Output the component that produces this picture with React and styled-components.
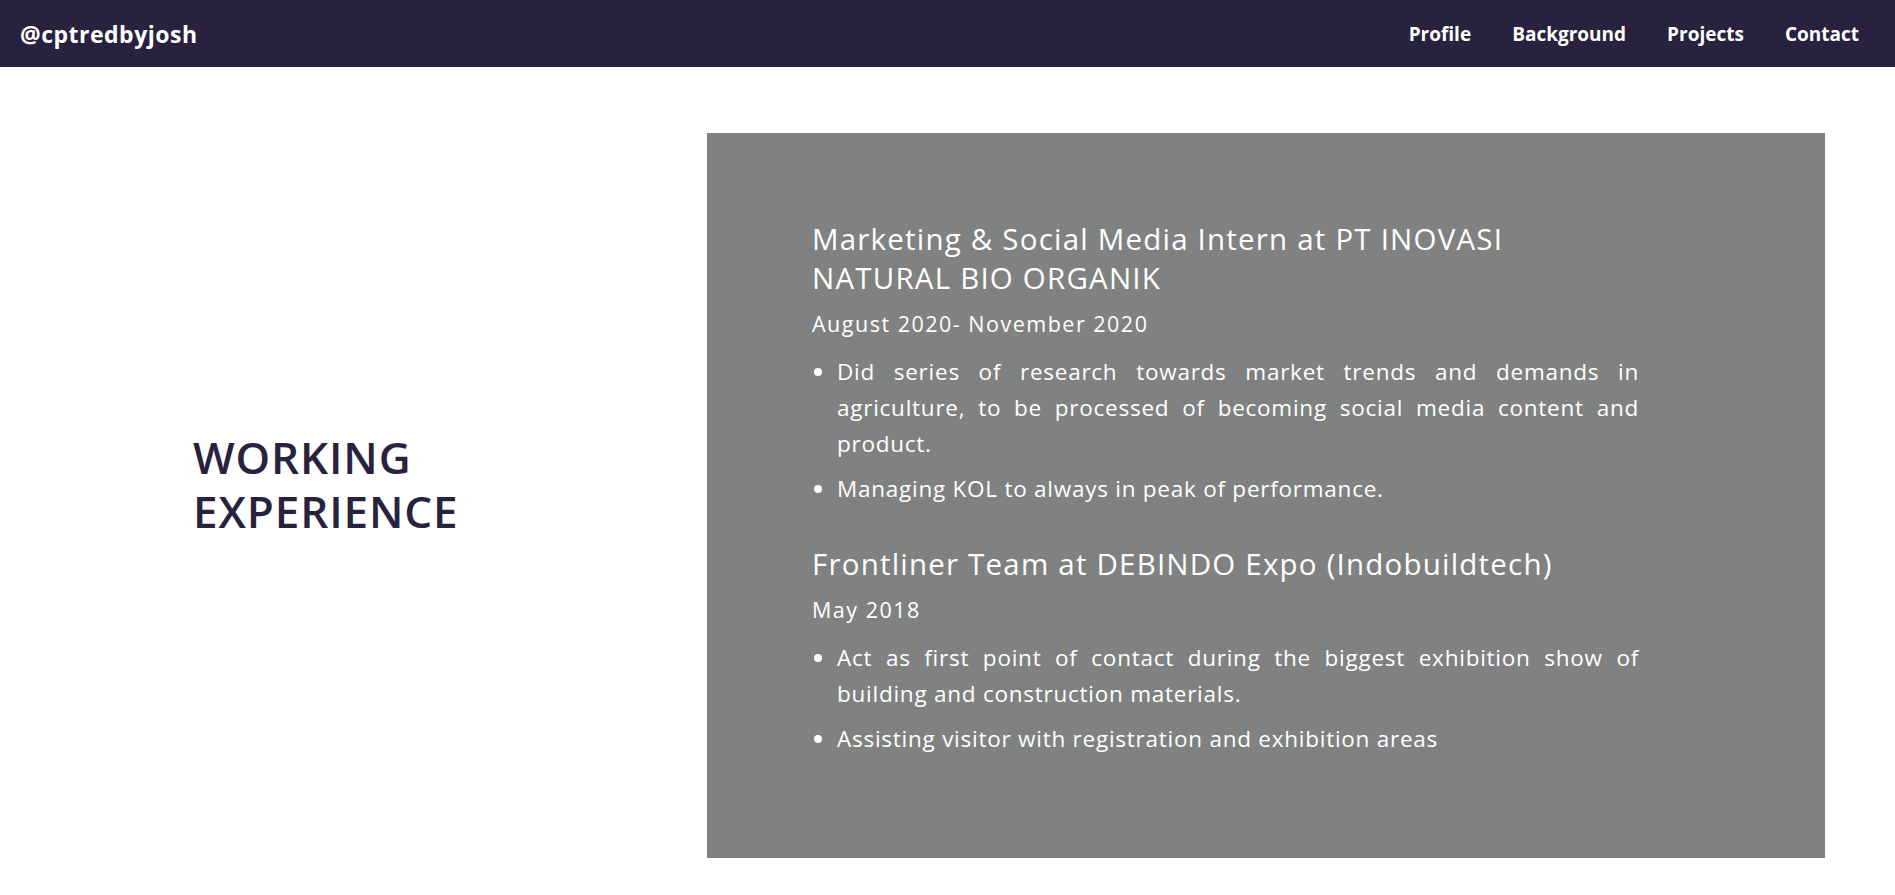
import styled, { createGlobalStyle } from "styled-components";

const GlobalStyle = createGlobalStyle`
    * {
        box-sizing: border-box;
    }
    body {
        margin: 0;
        font-family: "Open Sans", "Lato", sans-serif;
        background: #ffffff;
    }
`;

const jobs = [
    {
        title: ["Marketing & Social Media Intern at PT INOVASI", "NATURAL BIO ORGANIK"],
        date: "August 2020- November 2020",
        points: [
            "Did series of research towards market trends and demands in agriculture, to be processed of becoming social media content and product.",
            "Managing KOL to always in peak of performance.",
        ],
    },
    {
        title: ["Frontliner Team at DEBINDO Expo (Indobuildtech)"],
        date: "May 2018",
        points: [
            "Act as first point of contact during the biggest exhibition show of building and construction materials.",
            "Assisting visitor with registration and exhibition areas",
        ],
    },
];

const links = ["Profile", "Background", "Projects", "Contact"];

export default function App() {
    return (
        <>
            <GlobalStyle />
            <StyledNav>
                <StyledLogo href="#">@cptredbyjosh</StyledLogo>
                <StyledLinks>
                    {links.map((link) => (
                        <StyledLink key={link} href="#">{link}</StyledLink>
                    ))}
                </StyledLinks>
            </StyledNav>
            <StyledSection>
                <StyledSide>
                    <StyledHeading>
                        <StyledHeadingLine>WORKING</StyledHeadingLine>
                        <StyledHeadingLine>EXPERIENCE</StyledHeadingLine>
                    </StyledHeading>
                </StyledSide>
                <StyledCard>
                    {jobs.map((job, index) => (
                        <StyledJob key={job.date} $first={index === 0}>
                            <StyledTitle>
                                {job.title.map((line, i) => (
                                    <span key={line}>{i > 0 && <br />}{line}</span>
                                ))}
                            </StyledTitle>
                            <StyledDate>{job.date}</StyledDate>
                            <StyledList>
                                {job.points.map((point) => (
                                    <StyledItem key={point}>{point}</StyledItem>
                                ))}
                            </StyledList>
                        </StyledJob>
                    ))}
                </StyledCard>
            </StyledSection>
        </>
    );
}

const StyledNav = styled.nav`
    display: flex;
    align-items: center;
    justify-content: space-between;
    height: 67px;
    padding: 0 36px 0 20px;
    background-color: #28223f;
`;

const StyledLogo = styled.a`
    color: #ffffff;
    font-size: 23px;
    font-weight: 700;
    letter-spacing: 0.5px;
    text-decoration: none;
`;

const StyledLinks = styled.div`
    display: flex;
    gap: 41px;
`;

const StyledLink = styled.a`
    color: #ffffff;
    font-size: 19px;
    font-weight: 700;
    text-decoration: none;
`;

const StyledSection = styled.section`
    display: flex;
    padding: 66px 70px 40px 0;
`;

const StyledSide = styled.div`
    display: flex;
    align-items: center;
    width: 707px;
    flex-shrink: 0;
    padding-left: 193px;
`;

const StyledHeading = styled.h2`
    display: flex;
    flex-direction: column;
    margin: 0 0 24px;
    color: #28223f;
    font-size: 44px;
    font-weight: 600;
    letter-spacing: 0.9px;
`;

const StyledHeadingLine = styled.span`
    display: block;
    height: 54px;
    line-height: 54px;
`;

const StyledCard = styled.div`
    width: 1118px;
    padding: 86px 186px 101px 105px;
    background-color: #7f8280;
    color: #ffffff;
`;

const StyledJob = styled.div`
    margin-top: ${(props) => (props.$first ? "0" : "37px")};
`;

const StyledTitle = styled.h3`
    margin: 0;
    font-size: 29.5px;
    font-weight: 400;
    letter-spacing: 1.2px;
    line-height: 39px;
`;

const StyledDate = styled.p`
    margin: 12px 0 0;
    font-size: 21.5px;
    letter-spacing: 1.5px;
    line-height: 30px;
`;

const StyledList = styled.ul`
    margin: 15px 0 0;
    padding-left: 25px;
`;

const StyledItem = styled.li`
    font-size: 22.5px;
    letter-spacing: 0.75px;
    line-height: 36px;
    text-align: justify;

    & + & {
        margin-top: 9px;
    }
`;
